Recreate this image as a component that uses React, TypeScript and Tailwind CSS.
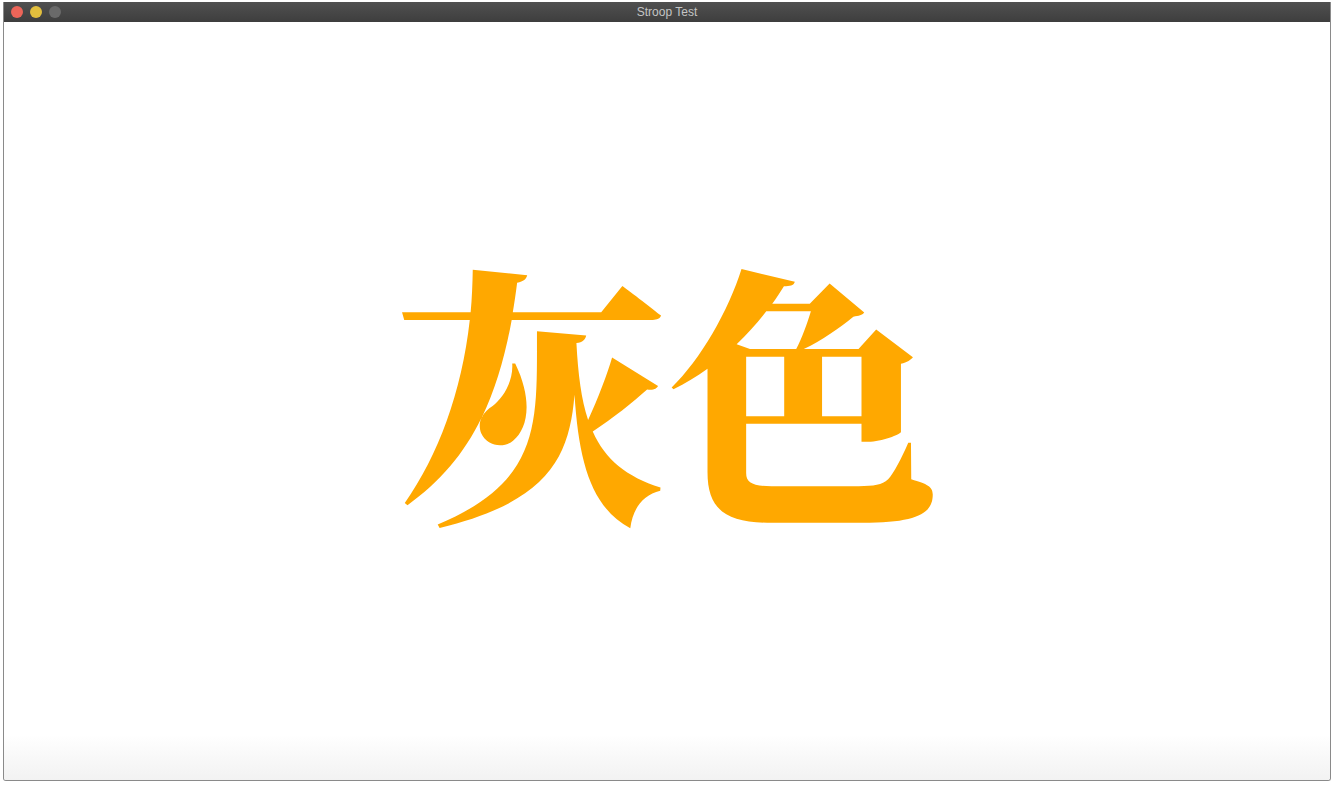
export default function App() {
  return (
    <div className="w-[1335px] h-[785px] bg-white overflow-hidden pl-[3px] pr-[4px] pt-[2px] pb-[4px]">
      <div className="flex flex-col h-full border border-[#8a8a8a] border-t-0 rounded-b-[3px] overflow-hidden">
        <div className="relative flex items-center h-[20px] bg-gradient-to-b from-[#505050] to-[#3e3e3e] px-[7px]">
          <div className="flex items-center gap-[7px]">
            <span className="w-[12px] h-[12px] rounded-full bg-[#ec6559]" />
            <span className="w-[12px] h-[12px] rounded-full bg-[#e2bf3e]" />
            <span className="w-[12px] h-[12px] rounded-full bg-[#6a6a6a]" />
          </div>
          <div
            className="absolute inset-0 flex items-center justify-center text-[12px] text-[#c4c4c4]"
            style={{ fontFamily: '"Liberation Sans", Arial, sans-serif' }}
          >
            Stroop Test
          </div>
        </div>
        <div className="flex-1 flex items-center justify-center bg-gradient-to-b from-white from-[94%] to-[#f2f2f2]">
          <span
            className="text-[272px] leading-none font-black text-[#ffa800] tracking-[0px] -mt-[30px]"
            style={{ fontFamily: '"Noto Serif CJK SC", "Noto Sans CJK SC", serif' }}
          >
            灰色
          </span>
        </div>
      </div>
    </div>
  );
}
